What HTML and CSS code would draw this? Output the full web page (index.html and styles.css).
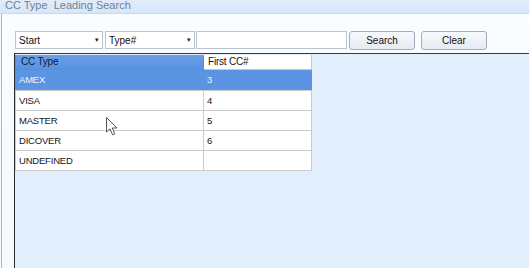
FILE: index.html
```html
<!DOCTYPE html>
<html lang="en">
<head>
  <meta charset="UTF-8" />
  <title>CC Type Leading Search</title>
  <link rel="stylesheet" href="styles.css">
</head>
<body>
  <div class="window">
    <div class="titlebar">CC Type&nbsp; Leading Search</div>
    <div class="main">
      <div class="toolbar">
        <div class="combo combo-start"><span>Start</span><span class="arrow">&#9662;</span></div>
        <div class="combo combo-type"><span>Type#</span><span class="arrow">&#9662;</span></div>
        <input class="search-box" type="text" value="" />
        <button class="btn btn-search">Search</button>
        <button class="btn btn-clear">Clear</button>
      </div>
      <div class="grid-area">
        <table class="grid">
          <thead>
            <tr>
              <th class="col-type sorted">CC Type</th>
              <th class="col-first">First CC#</th>
            </tr>
          </thead>
          <tbody>
            <tr class="selected"><td>AMEX</td><td>3</td></tr>
            <tr><td>VISA</td><td>4</td></tr>
            <tr><td>MASTER</td><td>5</td></tr>
            <tr><td>DICOVER</td><td>6</td></tr>
            <tr><td>UNDEFINED</td><td></td></tr>
          </tbody>
        </table>
      </div>
    </div>
    <svg class="cursor" width="12" height="19" viewBox="0 0 12 19">
      <path d="M0.5 0.5 L0.5 15 L4 11.8 L6.6 17.8 L8.8 16.8 L6.3 11 L11 11 Z" fill="#fff" stroke="#555" stroke-width="1" stroke-linejoin="round"/>
    </svg>
  </div>
</body>
</html>
```

FILE: styles.css
```css
* { margin: 0; padding: 0; box-sizing: border-box; }
body, html {
  width: 529px;
  height: 268px;
  overflow: hidden;
  font-family: 'Liberation Sans', Arial, sans-serif;
  background: #f6fafe;
}
.window {
  position: relative;
  display: flex;
  flex-direction: column;
  height: 268px;
}
.titlebar {
  height: 14px;
  padding-left: 5px;
  font-size: 11px;
  line-height: 11px;
  color: #6f8298;
  background: linear-gradient(#e2ecf9, #d6e6f9);
  border-bottom: 1px solid #c3d9ee;
}
.main {
  flex: 1;
  display: flex;
  flex-direction: column;
  margin-left: 1px;
  border-left: 1px solid #a4b8d0;
  background: linear-gradient(#f9fdff, #f4f9fe);
}
.toolbar {
  display: flex;
  align-items: center;
  height: 18px;
  margin: 17px 0 4px 13px;
  font-size: 10px;
  color: #111;
}
.combo {
  display: flex;
  align-items: center;
  justify-content: space-between;
  height: 18px;
  padding: 0 3px 0 3px;
  background: #fff;
  border: 1px solid #bcc5cf;
}
.combo-start { width: 88px; margin-right: 2px; }
.combo-type { width: 90px; margin-right: 1px; }
.arrow { font-size: 7px; color: #222; }
.search-box {
  width: 151px;
  height: 18px;
  margin-right: 2px;
  border: 1px solid #bcc5cf;
  background: #fff;
}
.btn {
  height: 19px;
  width: 66px;
  font-family: 'Liberation Sans', Arial, sans-serif;
  font-size: 10px;
  color: #111;
  background: linear-gradient(#f7f9fc, #e6ebf2);
  border: 1px solid #a1aebd;
  border-radius: 3px;
}
.btn-search { margin-right: 6px; }
.grid-area {
  flex: 1;
  margin-left: 12px;
  border-top: 1px solid #3a3a3a;
  border-left: 1px solid #2a2a2a;
  background: #e3eefc;
}
.grid {
  border-collapse: collapse;
  font-size: 9.5px;
  letter-spacing: -0.2px;
  color: #151515;
  margin-top: 1px;
}
.grid th {
  height: 14px;
  font-weight: normal;
  text-align: left;
  line-height: 12px;
  font-size: 10px;
  border: 1px solid #c6c9cd;
  border-top: none;
  background: #fff;
  padding: 0 4px;
}
.grid th.sorted {
  background: linear-gradient(#6a9ee6, #5893e2);
  color: #0d1a30;
  border-color: #5a8fd8;
  padding-left: 5px;
}
.col-type { width: 188px; }
.col-first { width: 108px; }
.grid td {
  height: 20px;
  padding: 0 3px;
  background: #fff;
  border: 1px solid #c9cbce;
  border-top: none;
}
.grid tr.selected td {
  height: 21px;
  background: #5a94e3;
  color: #eef4ff;
  border-color: #5a94e3;
  border-bottom-color: #c9cbce;
}
.cursor {
  position: absolute;
  left: 106px;
  top: 117px;
}
```
